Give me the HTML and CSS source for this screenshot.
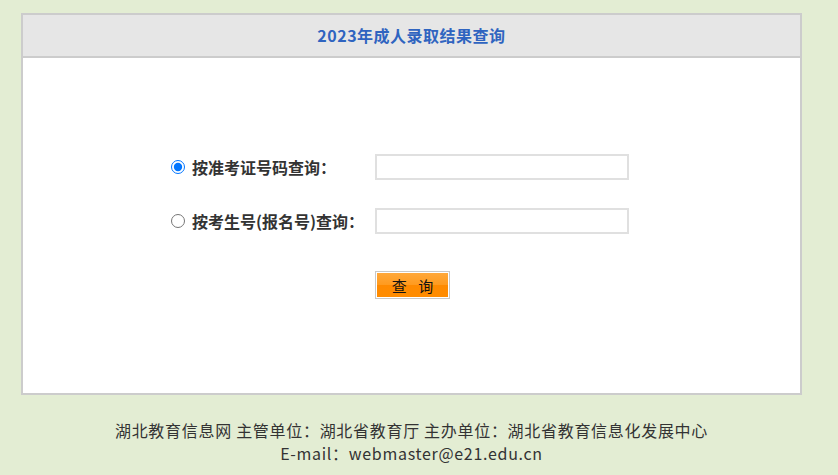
FILE: index.html
```html
<!DOCTYPE html>
<html lang="zh-CN">
<head>
    <meta charset="UTF-8">
    <meta name="viewport" content="width=device-width, initial-scale=1.0">
    <title>2023年成人录取结果查询</title>
    <link rel="stylesheet" href="styles.css">
</head>
<body>
    <div class="box">
        <div class="box-head">2023年成人录取结果查询</div>
        <div class="box-body">
            <form class="query-form" onsubmit="return false;">
                <label class="row-label">
                    <input type="radio" name="qtype" value="zkz" checked>
                    <span>按准考证号码查询：</span>
                </label>
                <input class="text-input" type="text" name="zkzh">

                <label class="row-label">
                    <input type="radio" name="qtype" value="ksh">
                    <span>按考生号(报名号)查询：</span>
                </label>
                <input class="text-input" type="text" name="ksh">

                <div></div>
                <div class="btn-wrap">
                    <button class="btn-query" type="submit">查 询</button>
                </div>
            </form>
        </div>
    </div>
    <div class="footer">
        <p>湖北教育信息网 主管单位：湖北省教育厅 主办单位：湖北省教育信息化发展中心</p>
        <p>E-mail：webmaster@e21.edu.cn</p>
    </div>
</body>
</html>
```

FILE: styles.css
```css
body {
    margin: 0;
    background-color: #e3edd3;
    font-family: "Noto Sans CJK SC", "Noto Sans", sans-serif;
    color: #333;
}
.box {
    width: 777px;
    margin: 13px 0 0 21px;
    background-color: white;
    border: 2px solid #cccccc;
}
.box-head {
    height: 41px;
    line-height: 41px;
    text-align: center;
    background-color: #e6e6e6;
    border-bottom: 2px solid #cccccc;
    color: #2f64c0;
    font-size: 16px;
    font-weight: bold;
    letter-spacing: 0.5px;
}
.box-body {
    padding: 96px 0 94px 148px;
}
.query-form {
    display: grid;
    grid-template-columns: 204px 254px;
    row-gap: 28px;
    align-items: center;
}
.row-label {
    display: flex;
    align-items: center;
    font-size: 16px;
    font-weight: bold;
    color: #333;
}
.row-label input {
    width: 14px;
    height: 14px;
    margin: 0 7px 0 0;
}
.text-input {
    box-sizing: border-box;
    width: 254px;
    height: 26px;
    border: 2px solid #e0e0e0;
    background: white;
    outline: none;
}
.btn-wrap {
    margin-top: 9px;
}
.btn-query {
    width: 75px;
    height: 28px;
    padding: 0;
    border: 1px solid #c8c8c8;
    box-shadow: inset 0 0 0 1px #fff;
    background: linear-gradient(#ffa93c 0%, #ff9a1e 50%, #ff8a00 51%, #ff8c00 100%);
    font-family: "Noto Sans CJK SC", sans-serif;
    font-size: 15px;
    color: #111;
    letter-spacing: 4px;
    text-indent: 4px;
    cursor: pointer;
}
.footer {
    width: 781px;
    margin: 24px 0 0 21px;
    text-align: center;
    font-size: 16px;
    letter-spacing: 0.7px;
    color: #333;
}
.footer p {
    margin: 0;
    line-height: 23px;
}
```
